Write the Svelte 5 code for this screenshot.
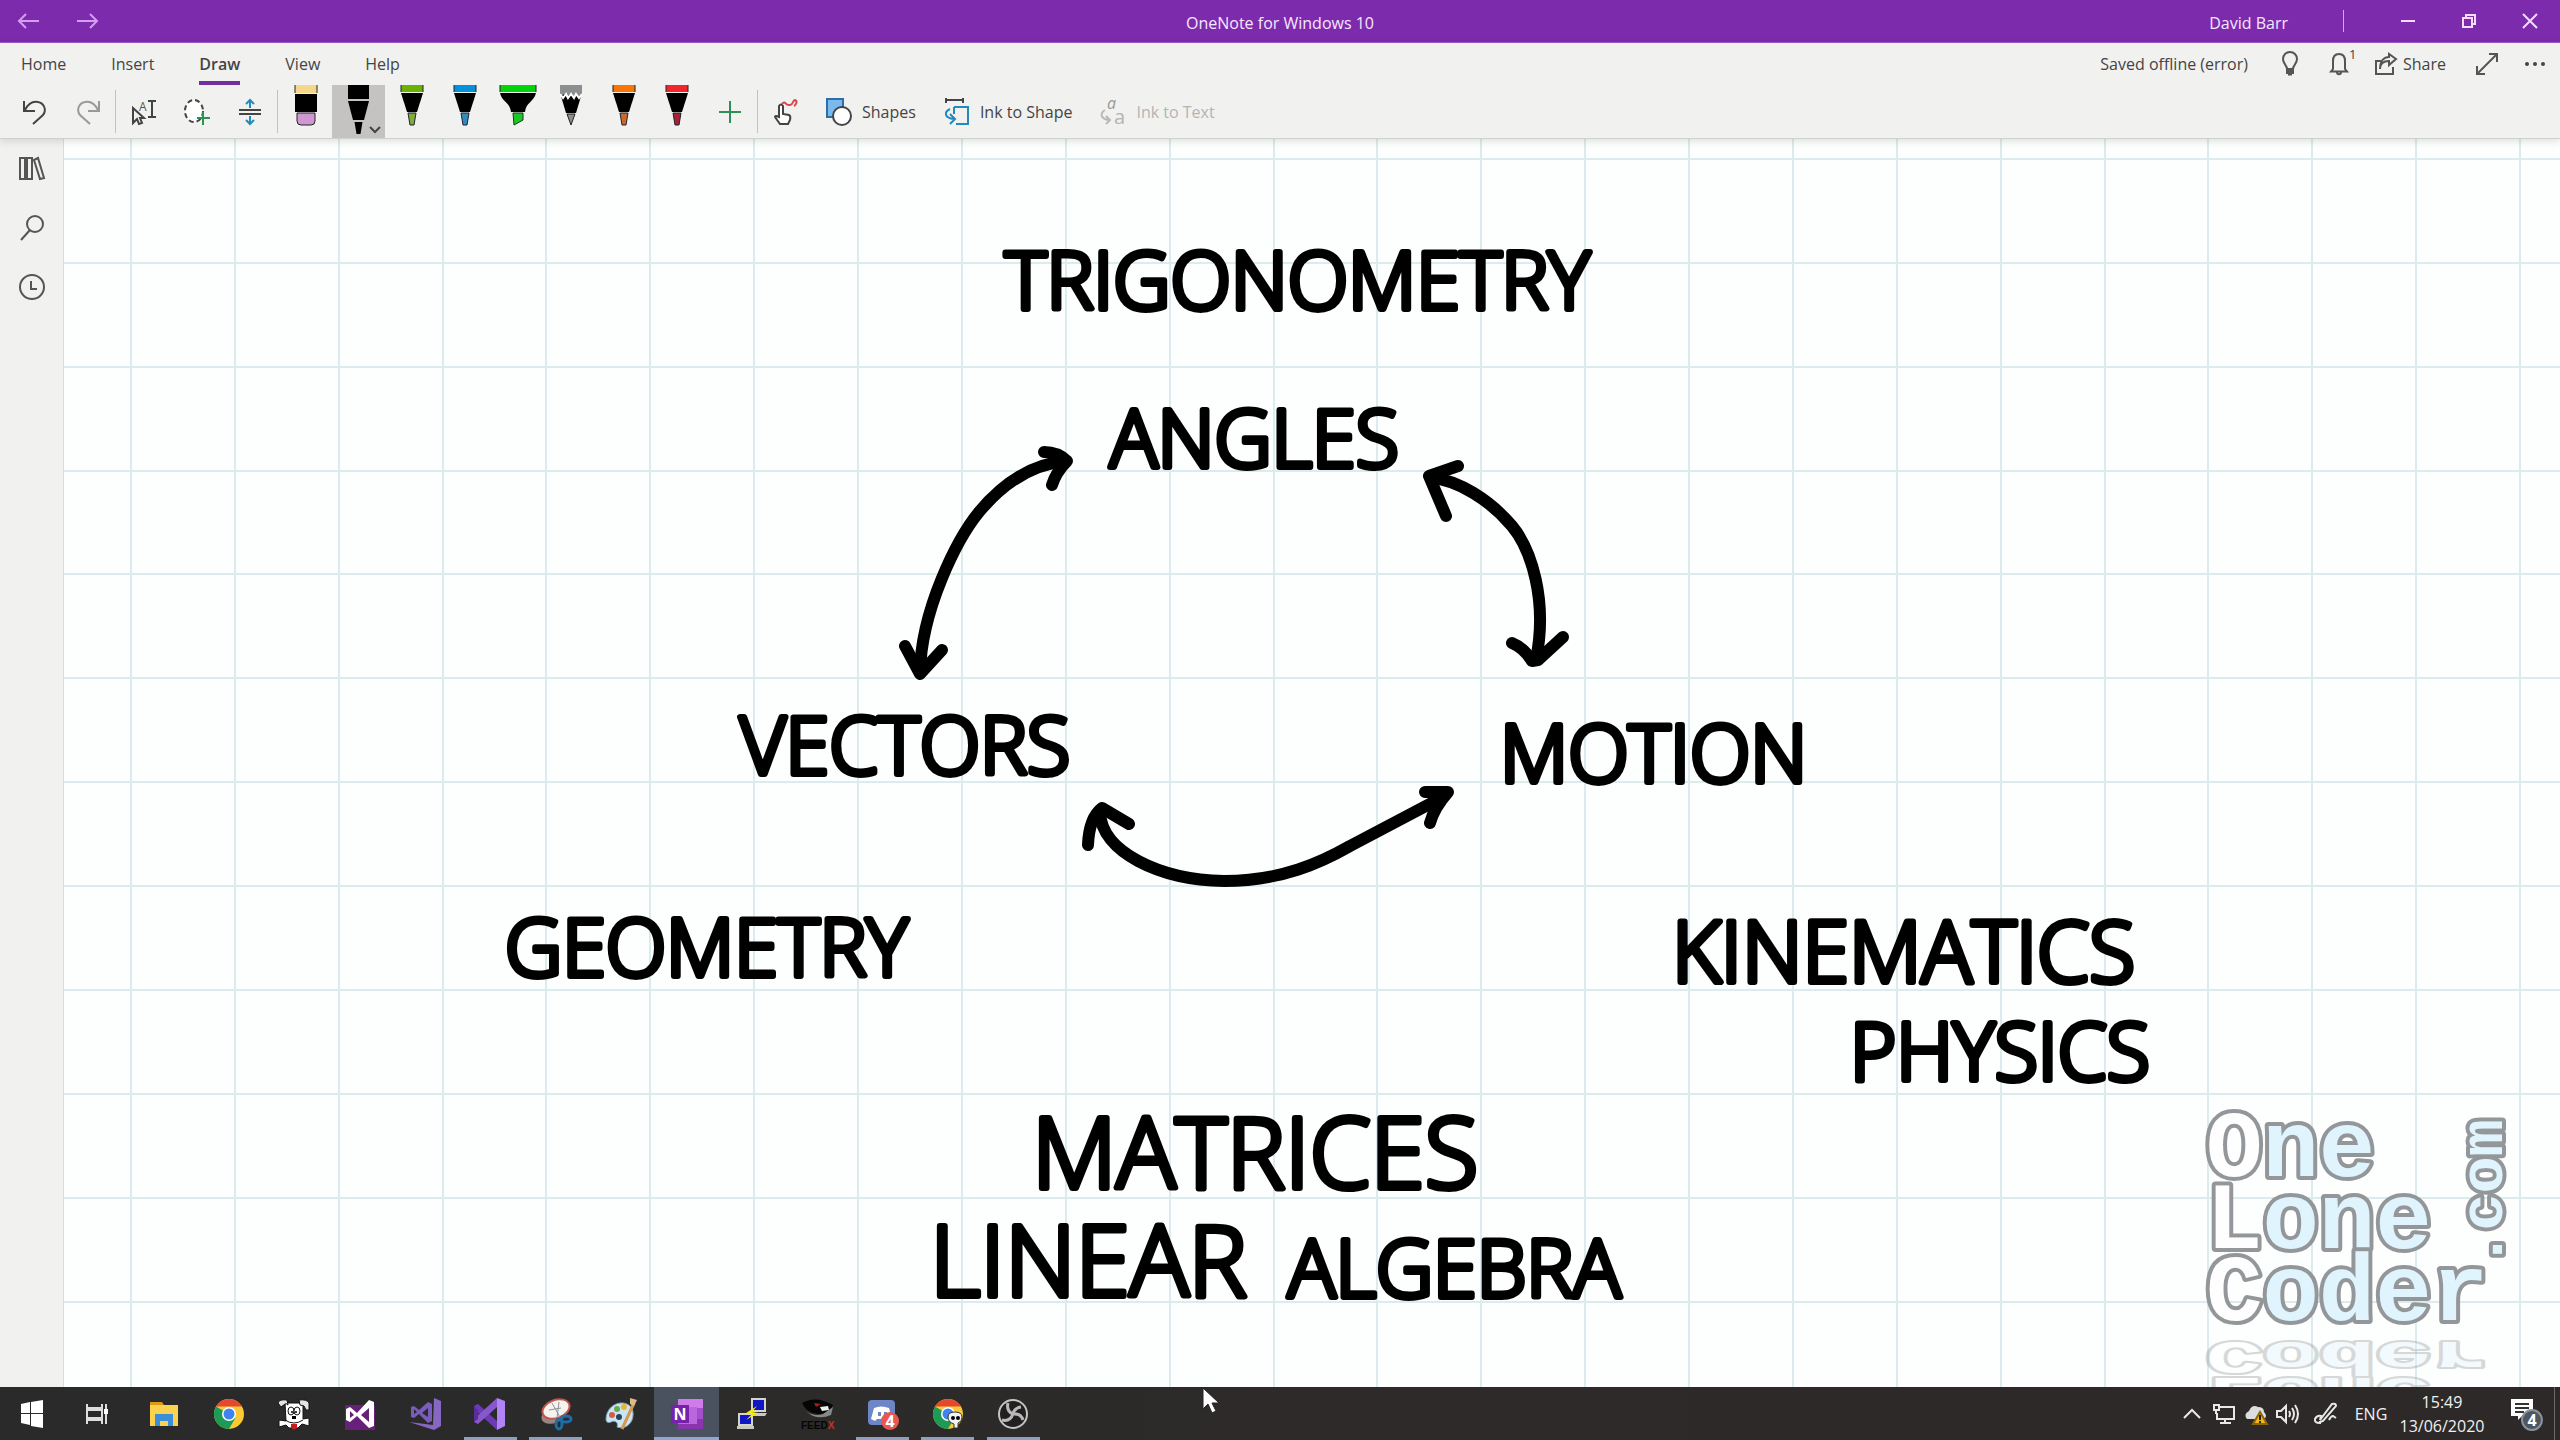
<script>
  const tabs = ['Home', 'Insert', 'Draw', 'View', 'Help'];
  let activeTab = $state('Draw');
  let activePen = $state('Black pen');

  const pens = [
    { name: 'Green pen', cap: '#6ab202', tip: '#7fae3a' },
    { name: 'Blue pen', cap: '#0391dc', tip: '#2f8cc0' },
    { name: 'Highlighter', cap: '#02d40c', tip: '#1cc72a', kind: 'marker' },
    { name: 'Pencil', cap: '#8b8f90', tip: '#8b8f90', kind: 'pencil' },
    { name: 'Orange pen', cap: '#fb7406', tip: '#c9692b' },
    { name: 'Red pen', cap: '#f0262c', tip: '#a8222f' },
  ];

  // Page grid, in the canvas drawing's own units
  const PITCH = 103.87;
  const columns = Array.from({ length: 24 }, (_, i) => Math.round(131 + i * PITCH));
  const rows = Array.from({ length: 12 }, (_, i) => Math.round(159 + i * PITCH));

  const words = [
    { text: 'TRIGONOMETRY', x: 1005, y: 309, size: 'm' },
    { text: 'ANGLES', x: 1110, y: 467, size: 'm' },
    { text: 'VECTORS', x: 740, y: 774, size: 'm' },
    { text: 'MOTION', x: 1500, y: 782, size: 'm' },
    { text: 'GEOMETRY', x: 505, y: 976, size: 'm' },
    { text: 'KINEMATICS', x: 1672, y: 982, size: 'l' },
    { text: 'PHYSICS', x: 1850, y: 1080, size: 'm' },
    { text: 'MATRICES', x: 1032, y: 1188, size: 'xl' },
    { text: 'LINEAR', x: 930, y: 1296, size: 'xl' },
    { text: 'ALGEBRA', x: 1288, y: 1297, size: 'm' },
  ];

  const apps = [
    { id: 'taskview', name: 'Task View' },
    { id: 'explorer', name: 'File Explorer' },
    { id: 'chrome', name: 'Google Chrome' },
    { id: 'dog', name: 'Dog' },
    { id: 'vs12', name: 'Visual Studio 2012' },
    { id: 'vs17', name: 'Visual Studio 2017' },
    { id: 'vs19', name: 'Visual Studio 2019', open: true },
    { id: 'snip', name: 'Snipping Tool', open: true },
    { id: 'paint', name: 'Paint' },
    { id: 'onenote', name: 'OneNote', open: true, active: true },
    { id: 'putty', name: 'PuTTY' },
    { id: 'feedx', name: 'Feed X' },
    { id: 'discord', name: 'Discord', open: true },
    { id: 'chrome2', name: 'Chrome profile', open: true },
    { id: 'obs', name: 'OBS Studio', open: true },
  ];
</script>

{#snippet chromeDisc()}
  <circle cx="17" cy="17" r="15" fill="#fbc934" />
  <path d="M4 9.500A15 15 0 0 1 30 9.500H17Z" fill="#e2492f" />
  <path d="M4 9.500A15 15 0 0 0 17 32L23.500 20.700L17 17Z" fill="#1f9a55" />
  <circle cx="17" cy="17" r="7" fill="#fff" />
  <circle cx="17" cy="17" r="5.500" fill="#3f83ee" />
{/snippet}

<div class="screen">
  <header class="titlebar">
    <nav class="history" aria-label="History">
      <button aria-label="Back"><svg width="22" height="16" viewBox="0 0 22 16"><path d="M21 8H1M8 1L1 8l7 7" /></svg></button>
      <button aria-label="Forward"><svg width="22" height="16" viewBox="0 0 22 16"><path d="M1 8h20M14 1l7 7-7 7" /></svg></button>
    </nav>
    <h1>OneNote for Windows 10</h1>
    <div class="window">
      <span class="user">David Barr</span>
      <span class="bar"></span>
      <button aria-label="Minimise"><svg width="14" height="14" viewBox="0 0 14 14"><path d="M0 7h14" /></svg></button>
      <button aria-label="Restore"><svg width="14" height="14" viewBox="0 0 14 14"><path d="M1 4h9v9H1zM4 4V1h9v9h-3" /></svg></button>
      <button aria-label="Close"><svg width="14" height="14" viewBox="0 0 14 14"><path d="M0 0l14 14M14 0L0 14" /></svg></button>
    </div>
  </header>

  <div class="ribbon">
    <div class="menu">
      <nav class="tabs" aria-label="Ribbon">
        {#each tabs as tab}
          <button class="tab" class:current={tab === activeTab} onclick={() => (activeTab = tab)}>{tab}</button>
        {/each}
      </nav>
      <div class="status">
        <span>Saved offline (error)</span>
        <button class="bulb" aria-label="Tell me"><svg width="18" height="24" viewBox="0 0 18 24"><path d="M6 17c0-4-4-5-4-10a7 7 0 0 1 14 0c0 5-4 6-4 10zM6 17v4h6v-4M6 19h6M7 22.500h4" /></svg></button>
        <button class="bell" aria-label="Notifications"><svg width="20" height="24" viewBox="0 0 20 24"><path d="M4 17V9c0-4 2-7 6-7s6 3 6 7v8l2 2.500H2L4 17zM8 20c0 3 4 3 4 0" /></svg><span class="badge">1</span></button>
        <button class="share"><svg width="22" height="22" viewBox="0 0 22 22"><path d="M6 8H1v13h17v-7M5 16c0-6 4-8 9-8v4l7-6-7-5v3C8 4 5 9 5 16z" /></svg>Share</button>
        <button class="expand" aria-label="Full screen"><svg width="22" height="22" viewBox="0 0 22 22"><path d="M1 21L21 1M13 1h8v8M1 13v8h8" /></svg></button>
        <button class="more" aria-label="More options"><svg width="22" height="6" viewBox="0 0 22 6"><circle cx="3" cy="3" r="2" /><circle cx="11" cy="3" r="2" /><circle cx="19" cy="3" r="2" /></svg></button>
      </div>
    </div>

    <div class="tools">
      <button class="tool" aria-label="Undo"><svg width="26" height="28" viewBox="0 0 26 28"><path d="M2 3v10h11M3 12c3-6 8-9 13-8 6 1 9 8 5 13L11 26" /></svg></button>
      <button class="tool faded" aria-label="Redo"><svg width="26" height="28" viewBox="0 0 26 28"><path d="M24 3v10H13M23 12c-3-6-8-9-13-8-6 1-9 8-5 13l10 9" /></svg></button>
      <span class="sep"></span>
      <button class="tool" aria-label="Select objects or type text">
        <svg width="26" height="28" viewBox="0 0 26 28"><path d="M2 10v15l4-4 2 5 3-1-2-5h4zM17 3h8M17 19h8M21 3v16" /><text class="glyph" x="8" y="13">A</text></svg>
      </button>
      <button class="tool" aria-label="Lasso select">
        <svg width="28" height="28" viewBox="0 0 28 28"><ellipse cx="11" cy="13" rx="9" ry="11" fill="#fff" stroke-dasharray="5 3" /><path class="green" d="M20 14v13M14 20h13" /></svg>
      </button>
      <button class="tool" aria-label="Insert space">
        <svg width="24" height="28" viewBox="0 0 24 28"><path d="M1 12h22M1 16h22" /><path class="blue" d="M12 10V2M8 6l4-4 4 4M12 18v8M8 22l4 4 4-4" /></svg>
      </button>
      <span class="sep"></span>

      <button class="tool pen" aria-label="Eraser">
        <svg width="24" height="42" viewBox="0 0 24 42"><path d="M1 0h22v8H1z" fill="#f5d78c" /><path class="edges" d="M1 0v8M23 0v8" /><path d="M1 9h22v18H1z" fill="#000" /><path d="M3 28h18v8q0 4-4 4H7q-4 0-4-4z" fill="#cf97d3" stroke="#222" /></svg>
      </button>
      <button class="tool pen" class:chosen={activePen === 'Black pen'} aria-label="Black pen" onclick={() => (activePen = 'Black pen')}>
        <svg width="53" height="50" viewBox="0 0 53 50"><path d="M16 0h21v14H16zM16 16h21l-5 19H21zM22.500 37h8l-2 12h-4z" fill="#000" /><path class="chevron" d="M38 42l5 5 5-5" /></svg>
      </button>
      {#each pens as pen}
        <button class="tool pen" class:chosen={activePen === pen.name} aria-label={pen.name} onclick={() => (activePen = pen.name)}>
          {#if pen.kind === 'marker'}
            <svg width="38" height="42" viewBox="0 0 38 42"><path d="M1 0h36v7H1z" fill={pen.cap} /><path class="edges" d="M1 0v7M37 0v7" /><path d="M1 8h36c-2 9-10 9-11 19H12C11 17 3 17 1 8z" fill="#000" /><path d="M14 28h10v7l-9 5z" fill={pen.tip} stroke="#143c14" /></svg>
          {:else if pen.kind === 'pencil'}
            <svg width="24" height="42" viewBox="0 0 24 42"><path d="M1 8h22l-6 20H7z" fill="#000" /><path d="M1 0h22v9l-3 3-3-3-3 3-3-3-3 3-3-3-2 2-2-2z" fill={pen.cap} /><path class="white" d="M1 9l3 4 3-4 2 4 3-4 3 4 2-4 3 4 3-4" /><path d="M8 29h8l-4 11z" fill={pen.tip} stroke="#222" /></svg>
          {:else}
            <svg width="24" height="42" viewBox="0 0 24 42"><path d="M1 0h22v7H1z" fill={pen.cap} /><path class="edges" d="M1 0v7M23 0v7" /><path d="M1 8h22l-6 19H7z" fill="#000" /><path d="M8 28h8l-2 12h-4z" fill={pen.tip} stroke="#223" /></svg>
          {/if}
        </button>
      {/each}
      <button class="tool" aria-label="Add pen"><svg width="24" height="24" viewBox="0 0 24 24"><path class="green" d="M12 1v22M1 12h22" /></svg></button>
      <span class="sep"></span>
      <button class="tool" aria-label="Draw with touch">
        <svg width="26" height="28" viewBox="0 0 26 28"><path d="M6 19V8q2-3 4 0v8l6 1q2 1 1 5l-2 4H7l-5-7q0-2 4 0z" fill="#fff" /><path class="red" d="M9 6c3-4 4 2 8 1s2-4 5-5c3 1 1 5-1 6" /></svg>
      </button>
      <button class="labelled">
        <svg width="26" height="28" viewBox="0 0 26 28"><path d="M1 1h16v18H1z" fill="#7ab8ee" stroke="#2b6ea8" /><circle cx="16" cy="18" r="9" fill="#fff" /></svg>Shapes
      </button>
      <button class="labelled">
        <svg width="26" height="28" viewBox="0 0 26 28"><path d="M2 2h17M2 0v5M19 0v5" /><path class="blue" d="M10 9h14v17H12M10 9v7" /><path class="blue" d="M6 11c-6 3-6 9 4 10M6 16l5 5-5 5" /></svg>Ink to Shape
      </button>
      <button class="labelled" disabled>
        <svg width="26" height="28" viewBox="0 0 26 28"><text class="glyph slanted" x="7" y="11">a</text><text class="glyph big" x="14" y="26">a</text><path d="M5 12c-5 3-5 9 4 10M6 18l4 4-4 4" /></svg>Ink to Text
      </button>
    </div>
  </div>

  <div class="workspace">
    <nav class="rail" aria-label="Notebook">
      <button aria-label="Notebooks"><svg width="26" height="24" viewBox="0 0 26 24"><path d="M1 1h5v21H1zM8 1h5v21H8zM15 3l4-2 6 20-4 1z" /></svg></button>
      <button aria-label="Search"><svg width="24" height="26" viewBox="0 0 24 26"><circle cx="15" cy="9" r="8" /><path d="M10 15L1 25" /></svg></button>
      <button aria-label="Recent notes"><svg width="26" height="26" viewBox="0 0 26 26"><circle cx="13" cy="13" r="12" /><path d="M12 7v8h6" /></svg></button>
    </nav>

    <main class="canvas">
      <svg class="page" viewBox="64 139 2496 1248" preserveAspectRatio="xMinYMin slice">
        <g class="grid">
          {#each columns as x}<path d="M{x} 139V1387" />{/each}
          {#each rows as y}<path d="M64 {y}H2560" />{/each}
        </g>

        <g class="arrows">
          <path d="M1066 461C1032 464 1004 482 979 512C957 539 921 610 920 673" />
          <path d="M1044 452Q1058 452 1067 461Q1056 472 1052 485M905 646L920 674L942 650" />
          <path d="M1432 478C1458 480 1490 500 1512 526C1531 549 1548 600 1536 660" />
          <path d="M1458 466L1429 476L1446 516M1512 643Q1524 648 1532 661L1538 660L1563 637" />
          <path d="M1100 812C1101 852 1160 880 1224 881C1282 881 1322 862 1350 846L1443 797" />
          <path d="M1088 845Q1089 818 1102 808L1129 824M1425 792H1448Q1434 808 1430 823" />
        </g>

        <g class="ink">
          {#each words as word}<text class={word.size} x={word.x} y={word.y}>{word.text}</text>{/each}
        </g>

        <g class="brand">
          <text x="2206" y="1176"><tspan class="initial">O</tspan>ne</text>
          <text x="2206" y="1248"><tspan class="initial">L</tspan>one</text>
          <text x="2206" y="1320"><tspan class="initial">C</tspan>oder</text>
          <text class="domain" transform="translate(2502 1268) rotate(-90)">.com</text>
        </g>
        <g class="brand mirrored" transform="translate(0 2002) scale(1 -0.5)" aria-hidden="true">
          <text x="2206" y="1248"><tspan class="initial">L</tspan>one</text>
          <text x="2206" y="1320"><tspan class="initial">C</tspan>oder</text>
        </g>
      </svg>
    </main>
  </div>

  <footer class="taskbar">
    <button class="start" aria-label="Start"><svg width="22" height="28" viewBox="0 0 22 28"><path d="M0 4l9-2v11H0zM10 2l12-2v13H10zM0 14h9v11l-9-2zM10 14h12v14l-12-2z" fill="#fff" /></svg></button>
    <div class="apps">
      {#each apps as app}
        <button class="app {app.id}" class:open={app.open} class:active={app.active} aria-label={app.name}>
          {#if app.id === 'taskview'}
            <svg width="34" height="34" viewBox="0 0 34 34"><path d="M7 7v4h15V7M7 27v-4h15v4M7 13h15v8H7zM26 7v20" fill="none" stroke="#ddd" stroke-width="2" /><path d="M24 12h4v5h-4z" fill="#fff" /></svg>
          {:else if app.id === 'explorer'}
            <svg width="34" height="34" viewBox="0 0 34 34"><path d="M3 5h12l2 3H3z" fill="#dd9a14" /><path d="M3 8h28v21H3z" fill="#fbd250" /><path d="M8 29V17h18v12h-5v-5h-8v5z" fill="#3a8fd8" /></svg>
          {:else if app.id === 'chrome'}
            <svg width="34" height="34" viewBox="0 0 34 34">{@render chromeDisc()}</svg>
          {:else if app.id === 'dog'}
            <svg width="34" height="34" viewBox="0 0 34 34"><path d="M8 6h18v16l6-1v8l-7-2-4 4H12l-3-3-7 2v-7l7 1z" fill="#fff" stroke="#111" /><path d="M1 6q1-4 9-3l1 5q-2-2-3-1l-4 3zM22 3q8-1 10 3v7h-3l-2-4-4-1z" fill="#e4e4e4" stroke="#111" /><ellipse cx="14" cy="14" rx="3" ry="4" fill="#fff" stroke="#111" /><ellipse cx="20" cy="14" rx="3" ry="4" fill="#fff" stroke="#111" /><circle cx="15" cy="15" r="1" /><circle cx="19" cy="15" r="1" /><path d="M15 19h4v3h-4z" /><path d="M8 23q9 6 18 0" fill="none" stroke="#111" /><path d="M14 27h6v4q-3 3-6 0z" fill="#c81a22" /></svg>
          {:else if app.id === 'vs12'}
            <svg width="34" height="34" viewBox="0 0 34 34"><path d="M2 8h30v25H2z" fill="#68217a" /><path d="M3 12l4-2 7 6L26 3l5 2v24l-5 2-12-12-7 6-4-2zM7 14v7l4-3zM26 11l-8 7 8 7z" fill="#fff" fill-rule="evenodd" /></svg>
          {:else if app.id === 'vs17'}
            <svg width="34" height="34" viewBox="0 0 34 34"><path d="M26 1l7 3v25l-7 4L1 25l24 3z" fill="#8668c4" /><path d="M3 10l3-1 5 4 9-8 4 2v17l-4 2-9-9-5 4-3-1zM6 12v5l3-2zM20 11l-6 5 6 4z" fill="#7a5cba" fill-rule="evenodd" /></svg>
          {:else if app.id === 'vs19'}
            <svg width="34" height="34" viewBox="0 0 34 34"><path d="M24 1l8 3v25l-8 4z" fill="#b084f4" /><path d="M1 9l4-2 19 17v9L1 12z" fill="#6b3ab4" /><path d="M1 25l4 2L24 10V1L1 22z" fill="#8658cc" /><path d="M1 9l4 4v9l-4 3z" fill="#5b2ba0" /></svg>
          {:else if app.id === 'snip'}
            <svg width="34" height="34" viewBox="0 0 34 34"><ellipse cx="15" cy="18" rx="13" ry="8" transform="rotate(-20 15 18)" fill="#9b8582" /><ellipse cx="17" cy="12" rx="14" ry="9" transform="rotate(-20 17 12)" fill="#f6f2f0" stroke="#c0574c" stroke-width="2" /><path d="M13 6l9 16M20 5l-2 16M10 13l12-2" stroke="#89949a" fill="none" /><ellipse cx="20" cy="27" rx="3" ry="5" fill="none" stroke="#1b6eaa" stroke-width="3" /><ellipse cx="27" cy="22" rx="5" ry="3" fill="none" stroke="#1b6eaa" stroke-width="3" /></svg>
          {:else if app.id === 'paint'}
            <svg width="34" height="34" viewBox="0 0 34 34"><path d="M2 22C2 12 11 5 19 6c9 1 12 9 9 17-3 7-10 9-15 7 2-5-3-7-6-5-2 1-5 1-5-3z" fill="#cbe6f3" stroke="#7ca3b6" /><circle cx="8" cy="18" r="3" fill="#d25d4c" /><circle cx="13" cy="12" r="3" fill="#68a94c" /><circle cx="20" cy="10" r="3" fill="#e8b53a" /><circle cx="15" cy="20" r="3" fill="#24455e" /><path d="M30 6L18 32" stroke="#d6974e" stroke-width="3" /><path d="M26 1l7 2-3 6-4-2z" fill="#e0b98a" /></svg>
          {:else if app.id === 'onenote'}
            <svg width="34" height="34" viewBox="0 0 34 34"><path d="M8 2h25v30H8z" fill="#b967dc" /><path d="M8 2h19v8H8zM27 2h6v9h-6z" fill="#cf7bea" /><path d="M27 22h6v10H8v-5h19z" fill="#8a35b0" /><path d="M27 11h6v11h-6z" fill="#a34fca" /><path d="M1 8h18v18H1z" fill="#7721ab" /><text class="letter" x="10" y="23">N</text></svg>
          {:else if app.id === 'putty'}
            <svg width="34" height="34" viewBox="0 0 34 34"><path d="M17 2h13v12H17zM4 17h13v11H4z" fill="#1016c8" stroke="#d4d4c8" stroke-width="2" /><path d="M15 16h17l-2 3H17zM2 29h17v3H2z" fill="#c9c9bd" /><path d="M22 9L11 16l6 1-6 6 12-7-6-1z" fill="#f4ea12" /></svg>
          {:else if app.id === 'feedx'}
            <svg width="34" height="34" viewBox="0 0 34 34"><path d="M2 6q14-8 31 2-4 10-14 9Q7 17 2 6z" fill="#050505" /><path d="M5 14q10 6 18 3l10-7-2 8q-9 4-18 1z" fill="#888" /><path d="M20 10l8-1 1 4-7 1z" fill="#eee" /><path d="M14 6l7 1-5 3z" fill="#a3221c" /><text class="tiny" x="1" y="32">FEED<tspan class="hot">X</tspan></text></svg>
          {:else if app.id === 'discord'}
            <svg width="34" height="34" viewBox="0 0 34 34"><rect x="2" y="3" width="27" height="25" rx="4" fill="#6d86c6" /><path d="M8 11q7-3 15 0l3 11-4 2-2-2h-9l-2 2-4-2zM12 15v4h3v-4zM18 15v4h3v-4z" fill="#fff" fill-rule="evenodd" /><circle cx="24" cy="24" r="9" fill="#e85850" /><text class="count" x="24" y="30">4</text></svg>
          {:else if app.id === 'chrome2'}
            <svg width="34" height="34" viewBox="0 0 34 34">{@render chromeDisc()}<path d="M17 20q0-5 7-5t7 5q0 5-4 6v5h-4v-4q-6-2-6-7z" fill="#f4f4f4" stroke="#333" /><circle cx="22" cy="21" r="2" /><circle cx="27" cy="21" r="2" /></svg>
          {:else}
            <svg width="34" height="34" viewBox="0 0 34 34"><circle cx="17" cy="17" r="14" fill="#231f20" stroke="#c4c4c4" stroke-width="2" /><path d="M12 6q-2 8 5 11 8-1 10 6M17 17q-3 8-11 6M17 17q1-6 8-7" fill="none" stroke="#b9b9b9" stroke-width="3" /></svg>
          {/if}
        </button>
      {/each}
    </div>

    <div class="tray">
      <button aria-label="Show hidden icons"><svg width="18" height="24" viewBox="0 0 18 24"><path d="M1 16l8-8 8 8" /></svg></button>
      <button aria-label="Network"><svg width="24" height="24" viewBox="0 0 24 24"><path d="M8 5h14v12H5v-6M8 21h11M13 17v4M2 3h5v5H2zM4 8v4" /></svg></button>
      <button aria-label="OneDrive"><svg width="24" height="24" viewBox="0 0 24 24"><path d="M3 17q-4-5 2-8 3-7 9-4 6 0 6 5 4 4 0 7z" fill="#ddd" stroke="none" /><path d="M16 10l7 12H9z" fill="#f7b719" stroke="#8b650a" /><path d="M16 13v5M16 19v2" stroke="#222" /></svg></button>
      <button aria-label="Volume"><svg width="24" height="24" viewBox="0 0 24 24"><path d="M1 9h4l5-5v16l-5-5H1zM13 9q2 3 0 6M16 6q4 6 0 12M19 3q6 9 0 18" /></svg></button>
      <button class="wide" aria-label="Windows Ink"><svg width="24" height="24" viewBox="0 0 24 24"><path d="M6 21q-6 0-5-4 2-4 6-3l-1 4 12-16q4-1 4 2L9 19l-3 1zM15 18q2-4 4-4l3 2" /></svg></button>
      <button class="language">ENG</button>
      <button class="clock"><time>15:49</time><span>13/06/2020</span></button>
      <button class="alerts" aria-label="4 notifications"><svg width="34" height="36" viewBox="0 0 34 36"><path d="M1 3h22v17H12l-4 4v-4H1z" fill="#fff" stroke="none" /><path d="M5 8h14M5 12h14M5 16h9" stroke="#333" /><circle cx="22" cy="24" r="10" fill="#4e5661" stroke="#8c939b" /><text class="count" x="22" y="30">4</text></svg></button>
      <span class="edge"></span>
    </div>
    <svg class="pointer" width="18" height="28" viewBox="0 0 18 28"><path d="M1 1v21l5-5 4 9 4-2-4-8h7z" fill="#fff" stroke="#222" /></svg>
  </footer>
</div>

<style>
  :global(body) { margin: 0; }
  .screen {
    display: flex;
    flex-direction: column;
    min-height: 100vh;
    overflow: hidden;
    background: #f1f1ef;
    color: #444;
    font: 16px/24px "Open Sans", "Noto Sans", sans-serif;
  }
  button {
    display: flex;
    align-items: center;
    justify-content: center;
    margin: 0;
    padding: 0;
    border: 0;
    background: none;
    color: inherit;
    font: inherit;
    white-space: nowrap;
  }
  svg { display: block; flex: none; overflow: visible; }

  .titlebar {
    display: grid;
    grid-template-columns: 1fr auto 1fr;
    align-items: center;
    height: 43px;
    box-sizing: border-box;
    border-bottom: 1px solid #a55bcb;
    background: #7d2bad;
    color: #f6e6ff;
  }
  .titlebar h1 { margin: 0; font: inherit; padding-top: 4px; }
  .titlebar svg { fill: none; stroke: #f4dcff; stroke-width: 1; }
  .history { display: flex; }
  .history button { width: 58px; height: 42px; }
  .titlebar .history svg { stroke: #d39ff0; stroke-width: 2; }
  .window { display: flex; justify-content: flex-end; align-items: center; }
  .user { padding-top: 4px; }
  .bar { width: 1px; height: 22px; margin: 0 33px 0 55px; background: #d6a3ec; }
  .window button { width: 61px; height: 42px; }
  .titlebar .window svg { stroke-width: 2; }

  .ribbon { position: relative; z-index: 1; border-bottom: 1px solid #d0d0ce; box-shadow: 0 2px 8px #0002; background: #f1f1ef; }
  .menu { display: flex; justify-content: space-between; height: 42px; }
  .tabs { display: flex; gap: 45px; padding-left: 21px; }
  .tab { height: 42px; border-bottom: 4px solid transparent; border-top: 4px solid transparent; box-sizing: border-box; }
  .tab.current { border-bottom-color: #7030a0; font-weight: 600; }
  .status { display: flex; align-items: center; padding-right: 14px; }
  .status svg, .rail svg { fill: none; stroke: #555; stroke-width: 2; }
  .bulb { margin-left: 33px; }
  .bell { position: relative; margin-left: 30px; }
  .badge { position: absolute; left: 20px; top: -8px; font-size: 13px; line-height: 20px; }
  .share { gap: 6px; margin-left: 26px; }
  .expand { margin-left: 30px; }
  .more { margin-left: 26px; }
  .status .more svg { fill: #444; stroke: none; }

  .tools { display: flex; align-items: stretch; height: 53px; padding-left: 8px; }
  .tool { width: 53px; }
  .tools svg { fill: none; stroke: #444; stroke-width: 2; }
  .faded { opacity: .5; }
  .sep { width: 1px; margin: 5px 1px; background: #c2c2c0; }
  .pen { align-items: flex-start; }
  .tools .pen svg { stroke: none; stroke-width: 1; }
  .edges { stroke: #222; }
  .pen .white { stroke: #fff; stroke-width: 2; fill: none; }
  .pen .chevron { stroke: #444; stroke-width: 2; fill: none; }
  .chosen { background: #c5c3c2; }
  .tools .green { stroke: #2f8f58; }
  .tools .blue { stroke: #2489bd; }
  .tools .red { stroke: #d5484c; }
  .labelled { gap: 10px; padding: 0 14px; }
  .labelled:disabled { color: #b4b4b4; }
  .labelled:disabled svg { stroke: #b8b8b8; }
  .glyph { fill: #555; stroke: none; font-size: 12px; }
  .slanted { fill: #999; font-size: 16px; font-style: italic; }
  .big { fill: #b4b4b4; font-size: 20px; }

  .workspace { display: flex; flex: 1; min-height: 600px; }
  .rail { width: 63px; border-right: 1px solid #dcdcdc; background: #f1f1ef; }
  .rail button { width: 63px; height: 59px; }
  .canvas { position: relative; flex: 1; overflow: hidden; background: #fdfefe; }
  .page { position: absolute; inset: 0; width: 100%; height: 100%; }
  .grid { fill: none; stroke: #dbebee; stroke-width: 2; }
  .arrows { fill: none; stroke: #000; stroke-width: 12; stroke-linecap: round; stroke-linejoin: round; }
  .ink {
    fill: #000;
    stroke: #000;
    stroke-width: 6;
    stroke-linejoin: round;
    font-family: "Open Sans", "Noto Sans", sans-serif;
    font-weight: 300;
  }
  .m { font-size: 79px; }
  .l { font-size: 84px; }
  .xl { font-size: 98px; }
  .brand {
    fill: #dff4ff;
    stroke: #8f9294;
    stroke-width: 8;
    stroke-linejoin: round;
    paint-order: stroke;
    font: bold 94px/1 "Liberation Mono", monospace;
    opacity: .95;
  }
  .initial { fill: #fff; }
  .domain { font-size: 62px; }
  .mirrored { opacity: .35; }

  .taskbar { position: relative; z-index: 1; display: flex; height: 53px; background: linear-gradient(90deg, #2a2a2b, #2d2a29 50%, #2e2929); color: #f0f0f0; }
  .start { width: 63px; }
  .apps { display: flex; width: 983px; }
  .app { flex: 1; }
  .app.taskview { flex: none; width: 68px; }
  .app.open { background: linear-gradient(#8e9fc0, #8e9fc0) bottom / 53px 3px no-repeat; }
  .app.active { background: linear-gradient(#8ea6d0, #8ea6d0) bottom / 100% 3px no-repeat #49525e; }
  .letter, .count { fill: #fff; stroke: none; font: bold 16px "Open Sans", sans-serif; text-anchor: middle; }
  .tiny { fill: #050505; font: bold 10px "Liberation Sans", sans-serif; }
  .hot { fill: #c8321f; }
  .tray { display: flex; align-items: center; margin-left: auto; }
  .tray svg { fill: none; stroke: #e8e8e8; stroke-width: 2; }
  .tray button { width: 32px; height: 53px; }
  .tray .wide { width: 44px; }
  .tray .language { width: 46px; }
  .tray .clock { flex-direction: column; width: 96px; }
  .tray .alerts { width: 46px; margin: 0 4px 0 14px; }
  .edge { width: 1px; height: 53px; margin-right: 5px; background: #6a6a6a; }
  .pointer { position: absolute; left: 1202px; top: 0; }
</style>
